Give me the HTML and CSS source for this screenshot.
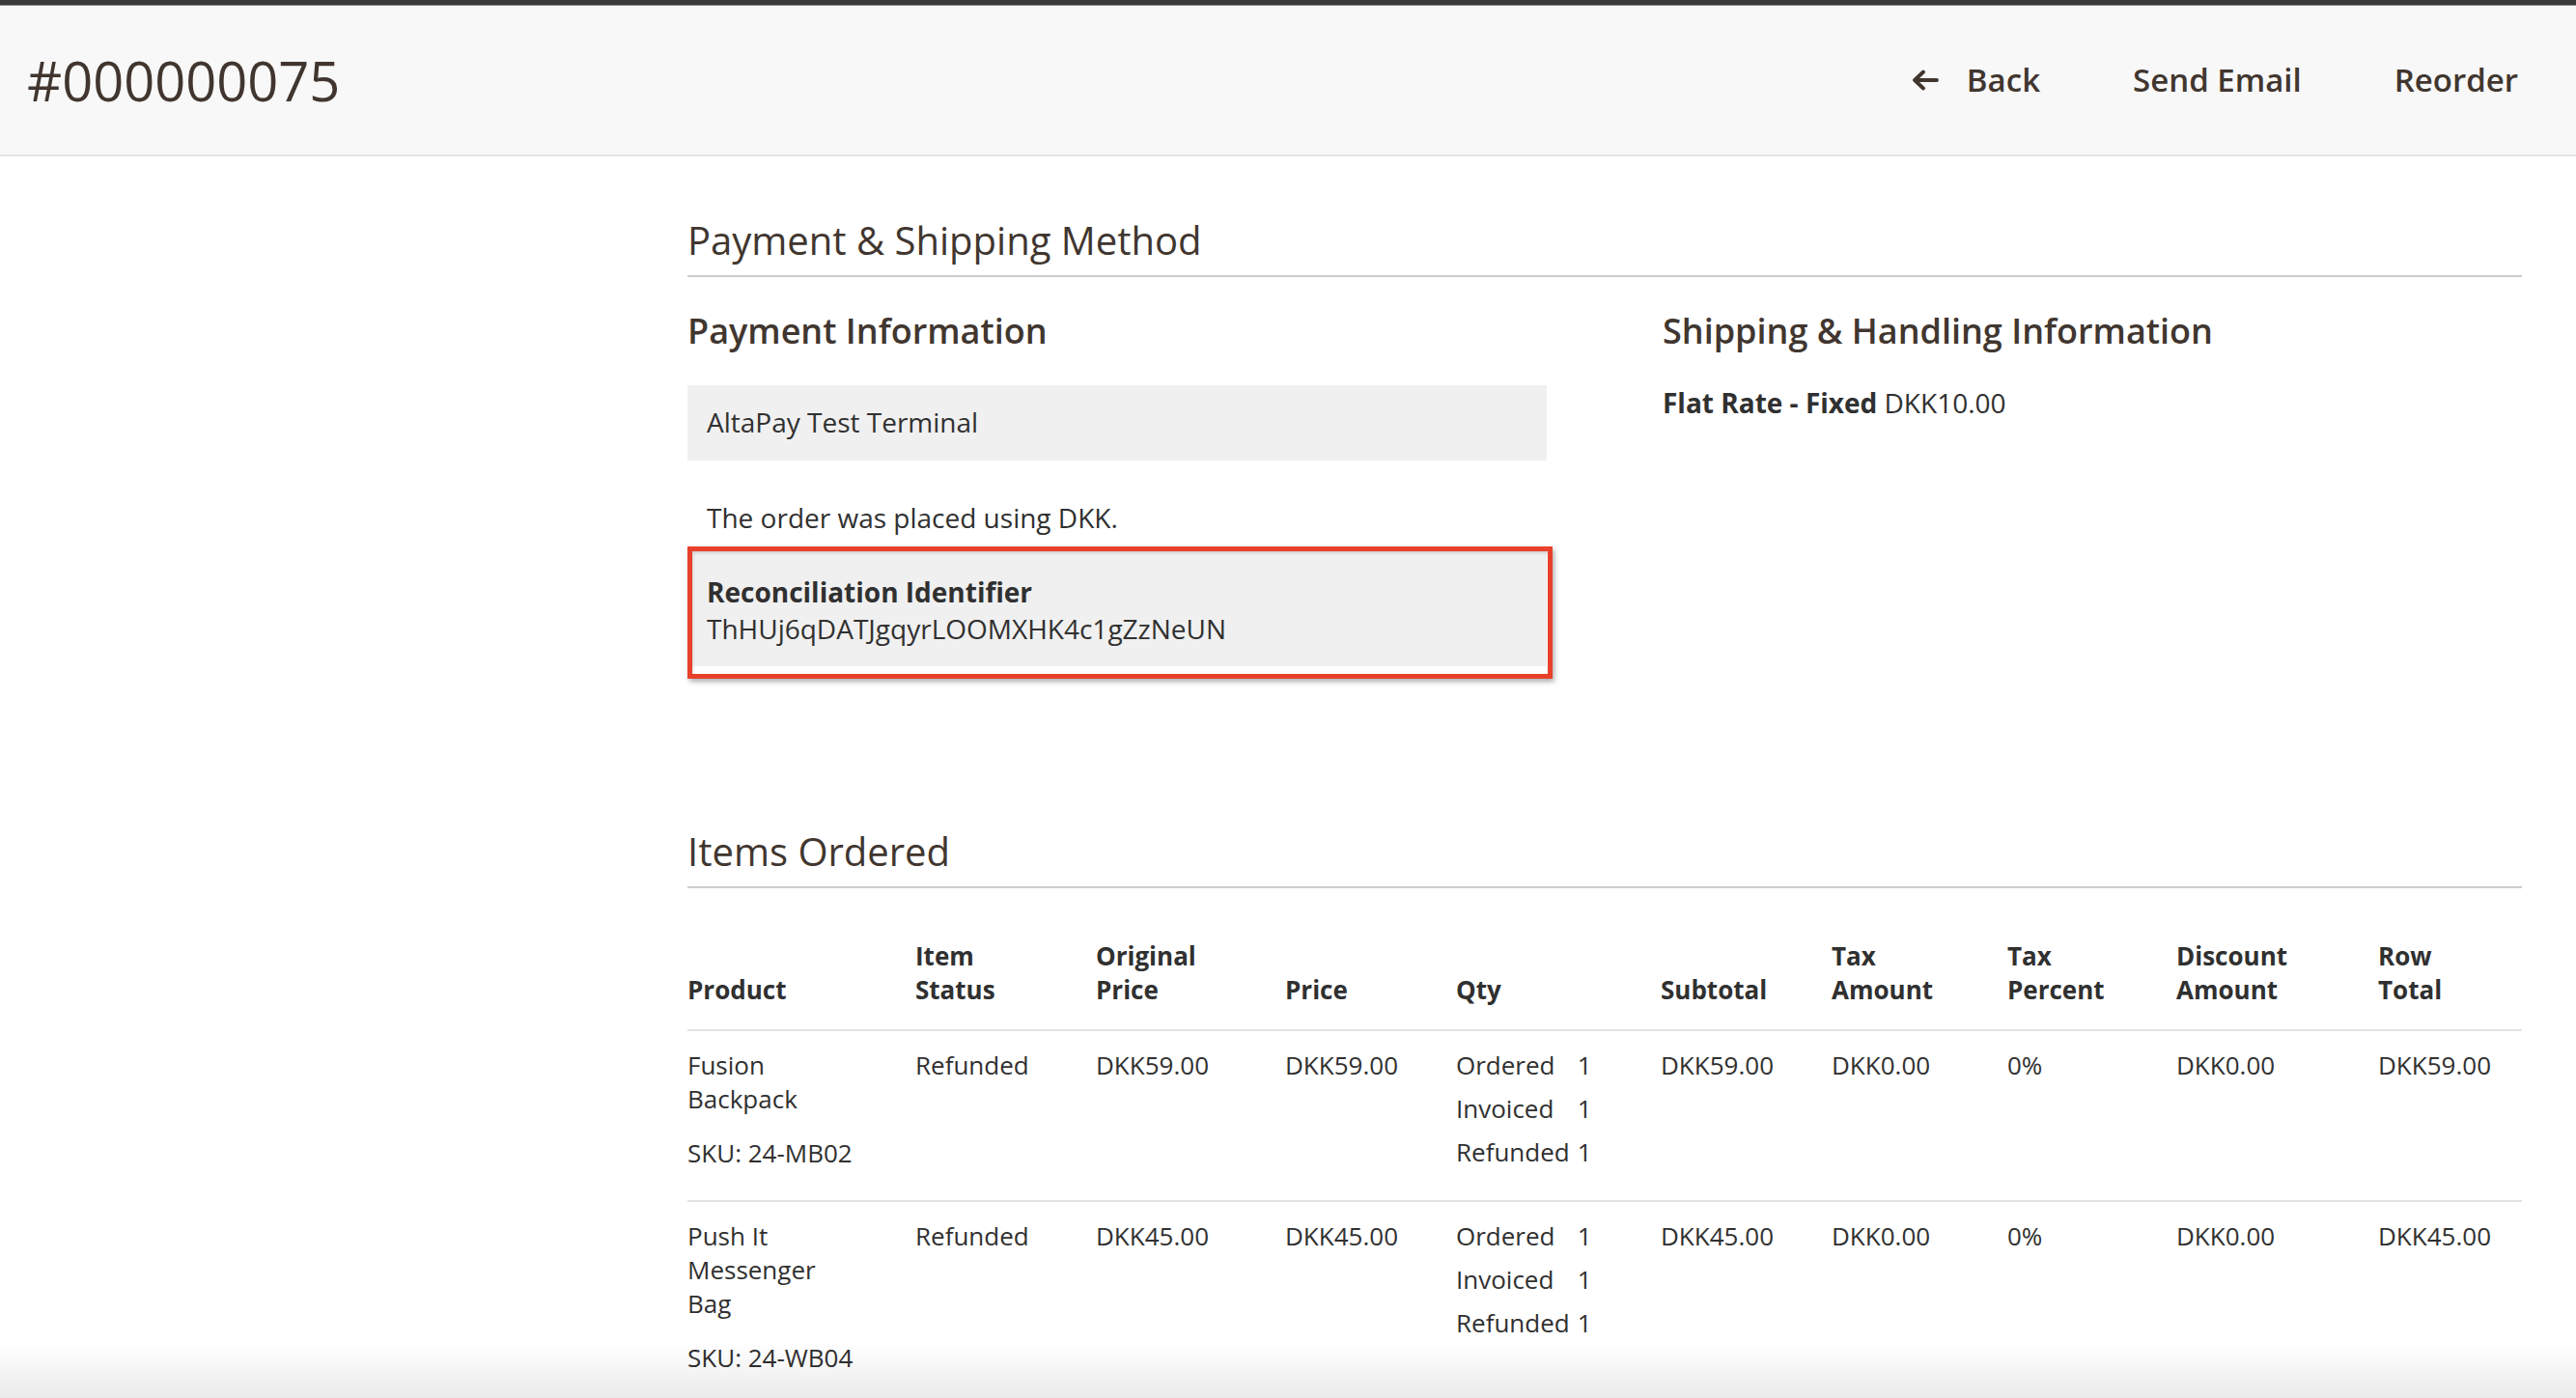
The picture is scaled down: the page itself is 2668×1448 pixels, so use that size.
FILE: index.html
```html
<!DOCTYPE html>
<html lang="en">
<head>
<meta charset="utf-8">
<title>#000000075</title>
<link rel="stylesheet" href="styles.css">
</head>
<body>
<div class="frame-top"></div>
<header class="page-header">
  <h1 class="page-title">#000000075</h1>
  <nav class="page-actions">
    <button class="action action-back" type="button">
      <svg class="back-icon" viewBox="0 0 28 22" width="28" height="22" aria-hidden="true"><path d="M26 11H4M12 2.5 3 11l9 8.5" fill="none" stroke="currentColor" stroke-width="3.8" stroke-linecap="round" stroke-linejoin="round"/></svg>
      <span>Back</span>
    </button>
    <button class="action" type="button">Send Email</button>
    <button class="action" type="button">Reorder</button>
  </nav>
</header>
<main class="page-main">
  <aside class="side-col"></aside>
  <div class="page-content">
    <section class="page-section">
      <h2 class="section-title">Payment &amp; Shipping Method</h2>
      <div class="section-items">
        <div class="section-item payment">
          <h3 class="item-title">Payment Information</h3>
          <div class="info-box">AltaPay Test Terminal</div>
          <p class="order-note">The order was placed using DKK.</p>
          <div class="recon-wrap">
            <div class="info-box recon">
              <strong>Reconciliation Identifier</strong>
              <span>ThHUj6qDATJgqyrLOOMXHK4c1gZzNeUN</span>
            </div>
            <div class="annotation"></div>
          </div>
        </div>
        <div class="section-item shipping">
          <h3 class="item-title">Shipping &amp; Handling Information</h3>
          <p class="ship-line"><strong>Flat Rate - Fixed</strong> DKK10.00</p>
        </div>
      </div>
    </section>

    <section class="page-section items-section">
      <h2 class="section-title">Items Ordered</h2>
      <table class="items-table">
        <colgroup>
          <col class="c-product"><col class="c-status"><col class="c-orig"><col class="c-price"><col class="c-qty">
          <col class="c-sub"><col class="c-tax"><col class="c-taxp"><col class="c-disc"><col class="c-row">
        </colgroup>
        <thead>
          <tr>
            <th>Product</th>
            <th>Item<br>Status</th>
            <th>Original<br>Price</th>
            <th>Price</th>
            <th>Qty</th>
            <th>Subtotal</th>
            <th>Tax<br>Amount</th>
            <th>Tax<br>Percent</th>
            <th>Discount<br>Amount</th>
            <th>Row<br>Total</th>
          </tr>
        </thead>
        <tbody>
          <tr>
            <td><div class="product-name">Fusion Backpack</div><div class="sku">SKU: 24-MB02</div></td>
            <td>Refunded</td>
            <td>DKK59.00</td>
            <td>DKK59.00</td>
            <td>
              <div class="qty-table">
                <span>Ordered</span><span>1</span>
                <span>Invoiced</span><span>1</span>
                <span>Refunded</span><span>1</span>
              </div>
            </td>
            <td>DKK59.00</td>
            <td>DKK0.00</td>
            <td>0%</td>
            <td>DKK0.00</td>
            <td>DKK59.00</td>
          </tr>
          <tr>
            <td><div class="product-name">Push It Messenger Bag</div><div class="sku">SKU: 24-WB04</div></td>
            <td>Refunded</td>
            <td>DKK45.00</td>
            <td>DKK45.00</td>
            <td>
              <div class="qty-table">
                <span>Ordered</span><span>1</span>
                <span>Invoiced</span><span>1</span>
                <span>Refunded</span><span>1</span>
              </div>
            </td>
            <td>DKK45.00</td>
            <td>DKK0.00</td>
            <td>0%</td>
            <td>DKK0.00</td>
            <td>DKK45.00</td>
          </tr>
        </tbody>
      </table>
    </section>
  </div>
</main>
<div class="bottom-fade"></div>
</body>
</html>
```

FILE: styles.css
```css
html, body {
  margin: 0;
  padding: 0;
  height: 1448px;
  overflow: hidden;
  background: #ffffff;
}

body {
  font-family: "Open Sans", "Liberation Sans", sans-serif;
  font-size: 28px;
  color: #303030;
}

.frame-top {
  height: 5px;
  background: #3a3a3c;
  border-bottom: 1px solid #8d8d8d;
}

.page-header {
  height: 154px;
  background: #f8f8f8;
  border-bottom: 2px solid #e3e3e3;
  display: flex;
  align-items: center;
  justify-content: space-between;
  padding: 0 60px 0 28px;
}

.page-title {
  margin: 0;
  font-size: 56px;
  line-height: 67px;
  font-weight: 400;
  color: #41362f;
}

.page-actions {
  display: flex;
  align-items: center;
  gap: 96px;
}

.action {
  display: flex;
  align-items: center;
  gap: 29px;
  background: none;
  border: 0;
  padding: 0;
  margin: 0;
  font-family: inherit;
  font-size: 33px;
  line-height: 40px;
  font-weight: 600;
  color: #41362f;
  cursor: pointer;
}

.back-icon {
  display: block;
  color: #41362f;
}

.page-main {
  display: grid;
  grid-template-columns: 712px 1900px;
}

.section-title {
  margin: 0;
  font-size: 40px;
  line-height: 48px;
  font-weight: 400;
  color: #41362f;
  padding-bottom: 12px;
  border-bottom: 2px solid #cccccc;
}

.page-section:first-child {
  margin-top: 63px;
}

.section-items {
  display: grid;
  grid-template-columns: 1fr 1fr;
}

.section-item.payment {
  padding-right: 60px;
}

.section-item.shipping {
  padding-left: 60px;
}

.item-title {
  margin: 34px 0 0;
  font-size: 36px;
  line-height: 43px;
  font-weight: 600;
  color: #41362f;
}

.info-box {
  background: #f0f0f0;
  padding: 18px 20px 20px;
  line-height: 40px;
  margin-top: 35px;
  color: #303030;
}

.order-note {
  margin: 39px 0 0;
  padding: 0 20px;
  line-height: 40px;
}

.recon-wrap {
  position: relative;
  margin-top: 10px;
}

.info-box.recon {
  margin-top: 0;
  padding: 28px 20px 20px;
  line-height: 38px;
  display: flex;
  flex-direction: column;
}

.info-box.recon strong {
  font-weight: 700;
  color: #303030;
}

.annotation {
  position: absolute;
  top: 0;
  left: 0;
  right: -6px;
  bottom: -13px;
  border: 5px solid #e8412b;
  box-shadow: 2px 3px 5px rgba(0, 0, 0, 0.32), inset 1px 2px 3px rgba(0, 0, 0, 0.14);
  pointer-events: none;
}

.ship-line {
  margin: 33px 0 0;
  line-height: 40px;
}

.ship-line strong {
  font-weight: 700;
}

.items-section {
  margin-top: 168px;
}

.items-table {
  width: 1900px;
  table-layout: fixed;
  border-collapse: collapse;
  margin-top: 53px;
  font-size: 26px;
}

.c-product { width: 236px; }
.c-status { width: 187px; }
.c-orig { width: 196px; }
.c-price { width: 177px; }
.c-qty { width: 212px; }
.c-sub { width: 177px; }
.c-tax { width: 182px; }
.c-taxp { width: 175px; }
.c-disc { width: 209px; }
.c-row { width: 149px; }

.items-table th {
  text-align: left;
  vertical-align: bottom;
  font-weight: 700;
  line-height: 35px;
  padding: 0 0 23px;
  border-bottom: 2px solid #e3e3e3;
  color: #303030;
}

.items-table td {
  vertical-align: top;
  line-height: 35px;
  padding: 18px 0 31px;
  border-bottom: 2px solid #e3e3e3;
  color: #303030;
}

.items-table tbody tr:last-child td {
  border-bottom: 0;
}

.product-name {
  width: 180px;
}

.sku {
  margin-top: 21px;
  white-space: nowrap;
}

.qty-table {
  display: grid;
  grid-template-columns: max-content max-content;
  column-gap: 8px;
  row-gap: 10px;
}

.bottom-fade {
  position: fixed;
  left: 0;
  right: 0;
  bottom: 0;
  height: 58px;
  background: linear-gradient(to bottom, rgba(0, 0, 0, 0), rgba(0, 0, 0, 0.08));
  pointer-events: none;
}
```
